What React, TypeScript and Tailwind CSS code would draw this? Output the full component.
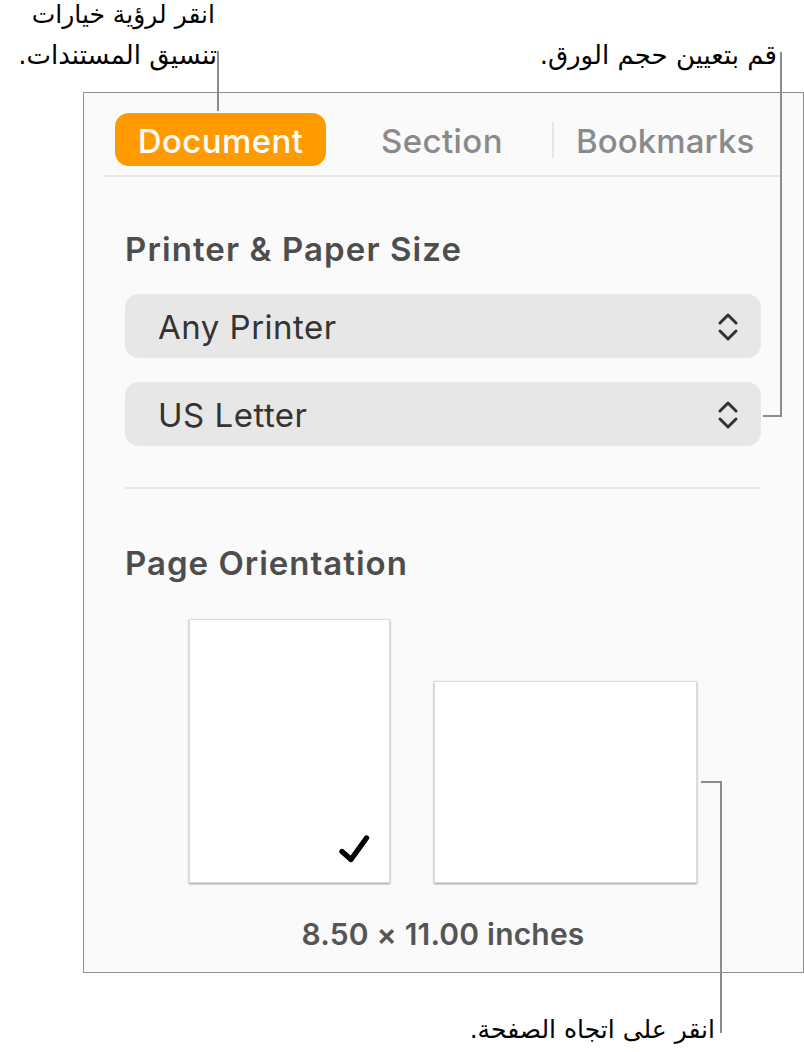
function Chevrons() {
  return (
    <svg width="22" height="32" viewBox="0 0 22 32" fill="none" stroke="#333333" strokeWidth="3" strokeLinecap="round" strokeLinejoin="round">
      <path d="M3 13 L11 5 L19 13" />
      <path d="M3 21 L11 29 L19 21" />
    </svg>
  )
}

function SelectBox({ label }: { label: string }) {
  return (
    <div className="flex h-16 items-center justify-between rounded-[14px] bg-[#e7e7e7] pl-[33px] pr-[22px]">
      <span className="pt-1 text-[33px] tracking-[0.5px] text-[#333333]">{label}</span>
      <Chevrons />
    </div>
  )
}

export default function App() {
  return (
    <div className="relative h-[1052px] w-[804px] overflow-hidden bg-white font-['Inter',sans-serif]">
      {/* Top callouts */}
      <div dir="rtl" className="flex h-[92px] justify-between pr-[27px] font-['DejaVu_Sans',sans-serif] text-[26px] leading-[30px] text-black">
        <p className="whitespace-nowrap pt-10">قم بتعيين حجم الورق.</p>
        <div className="flex w-[217px] flex-col gap-2.5 whitespace-nowrap">
          <p className="pr-0.5 text-[25px]">انقر لرؤية خيارات</p>
          <p>تنسيق المستندات.</p>
        </div>
      </div>

      {/* Panel */}
      <div className="ml-[83px] h-[881px] w-[721px] border border-[#8f8f8f] bg-[#fafafa] pl-5 pr-[22px] pt-5">
        <div className="flex h-[64px] items-start border-b-2 border-[#e8e8e8] text-[33px] font-medium tracking-[0.4px]">
          <div className="ml-[11px] flex h-[53px] w-[211px] items-center justify-center rounded-[14px] bg-[#ff9a00] pt-1 text-white">
            Document
          </div>
          <div className="ml-[55px] flex h-[53px] items-center pt-1 text-[#8a8a8a]">Section</div>
          <div className="ml-[49px] mt-[9px] h-[36px] w-0.5 bg-[#e6e6e6]" />
          <div className="ml-[22px] flex h-[53px] items-center pt-1 tracking-[0.1px] text-[#8a8a8a]">Bookmarks</div>
        </div>

        <div className="pl-[21px] pr-5">
          <h2 className="mt-[50px] text-[33px] font-semibold leading-[44px] tracking-[1.1px] text-[#4d4d4d]">Printer &amp; Paper Size</h2>
          <div className="mt-[23px] flex flex-col gap-6">
            <SelectBox label="Any Printer" />
            <SelectBox label="US Letter" />
          </div>
          <div className="mt-[41px] h-0.5 bg-[#e8e8e8]" />
          <h2 className="mt-[52px] text-[33px] font-semibold leading-[44px] tracking-[1px] text-[#4d4d4d]">Page Orientation</h2>

          <div className="mt-[34px] flex items-end pl-[64px]">
            <div className="relative h-[264px] w-[201px] border border-[#dcdcdc] bg-white shadow-[0_1px_2px_rgba(0,0,0,0.4)]">
              <svg className="absolute bottom-[19px] right-[19px]" width="32" height="28" viewBox="0 0 32 28" fill="none" stroke="#000000" strokeWidth="5.4" strokeLinecap="round" strokeLinejoin="round">
                <path d="M4 16.5 L13 24.5 L28.5 3" />
              </svg>
            </div>
            <div className="ml-11 h-[202px] w-[263px] border border-[#dcdcdc] bg-white shadow-[0_1px_2px_rgba(0,0,0,0.4)]" />
          </div>

          <p className="mt-[31px] text-center text-[30px] font-semibold leading-[40px] tracking-[0.2px] text-[#555555]">
            8.50 × 11.00 inches
          </p>
        </div>
      </div>

      {/* Bottom callout */}
      <p dir="rtl" className="mt-[42px] whitespace-nowrap pr-[89px] font-['DejaVu_Sans',sans-serif] text-[25px] leading-[30px] text-black">
        انقر على اتجاه الصفحة.
      </p>

      {/* Leader lines */}
      <div className="absolute left-[217px] top-[51px] h-[60px] w-0.5 bg-[#8c8c8c]" />
      <div className="absolute left-[763px] top-[415px] h-0.5 w-[18px] bg-[#8c8c8c]" />
      <div className="absolute left-[780px] top-[52px] h-[365px] w-0.5 bg-[#8c8c8c]" />
      <div className="absolute left-[701px] top-[781px] h-0.5 w-[21px] bg-[#8c8c8c]" />
      <div className="absolute left-[720px] top-[781px] h-[252px] w-0.5 bg-[#8c8c8c]" />
    </div>
  )
}
